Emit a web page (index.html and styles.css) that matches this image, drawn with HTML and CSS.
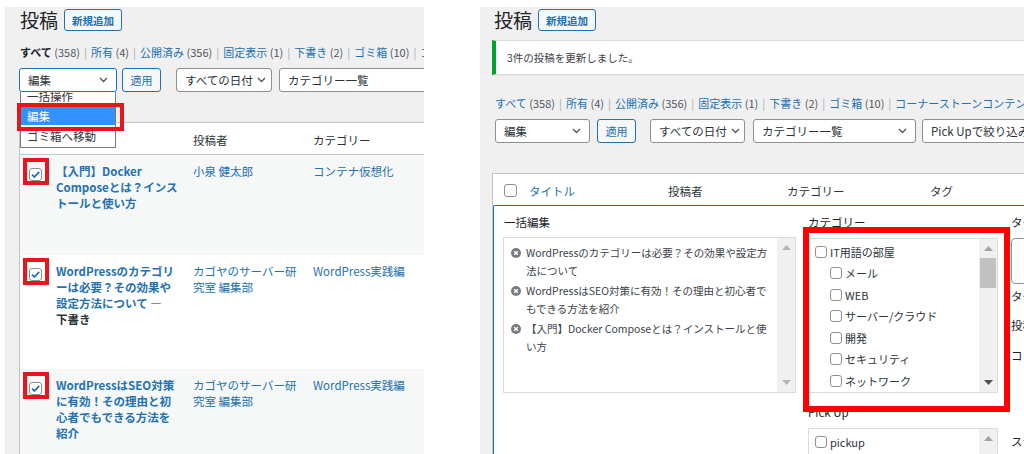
FILE: index.html
```html
<!DOCTYPE html>
<html lang="ja">
<head>
<meta charset="utf-8">
<title>投稿 一括編集</title>
<link rel="stylesheet" href="styles.css">
</head>
<body>
<div class="shots">

  <section class="panel panel-left">
    <div class="head"><h1>投稿</h1><span class="btn-add">新規追加</span></div>
    <div class="subsubsub">
      <span class="current">すべて <span class="count">(358)</span></span><span class="sep">|</span><a>所有 <span class="count">(4)</span></a><span class="sep">|</span><a>公開済み <span class="count">(356)</span></a><span class="sep">|</span><a>固定表示 <span class="count">(1)</span></a><span class="sep">|</span><a>下書き <span class="count">(2)</span></a><span class="sep">|</span><a>ゴミ箱 <span class="count">(10)</span></a><span class="sep">|</span><a>コーナーストーンコンテンツ</a>
    </div>
    <div class="tablenav">
      <div class="select focus w-bulk-l"><span>編集</span><svg width="9" height="6" viewBox="0 0 9 6"><path d="M1 1l3.5 3.5L8 1" fill="none" stroke="#50575e" stroke-width="1.4"/></svg></div>
      <span class="btn-apply ml-5">適用</span>
      <div class="select w-date-l ml-15"><span>すべての日付</span><svg width="9" height="6" viewBox="0 0 9 6"><path d="M1 1l3.5 3.5L8 1" fill="none" stroke="#50575e" stroke-width="1.4"/></svg></div>
      <div class="select w-cat ml-7"><span>カテゴリー一覧</span><svg width="9" height="6" viewBox="0 0 9 6"><path d="M1 1l3.5 3.5L8 1" fill="none" stroke="#50575e" stroke-width="1.4"/></svg></div>
    </div>

    <div class="dd">
      <div class="dd-opt dd-first">一括操作</div>
      <div class="dd-opt dd-sel">編集</div>
      <div class="dd-opt dd-last">ゴミ箱へ移動</div>
    </div>
    <div class="mark mark-opt"></div>

    <div class="lt">
      <div class="lt-head"><span></span><span>タイトル</span><span>投稿者</span><span>カテゴリー</span><span>タグ</span></div>
      <div class="lt-row alt r1">
        <div class="cb-cell"><span class="cb checked"><svg width="11" height="11" viewBox="0 0 11 11"><path d="M2 5.6l2.4 2.4L9.2 2.8" fill="none" stroke="#2271b1" stroke-width="1.8"/></svg></span><span class="mark mark-cb"></span></div>
        <div class="title"><a>【入門】Docker<br>Composeとは？インス<br>トールと使い方</a></div>
        <div class="link">小泉 健太郎</div>
        <div class="link">コンテナ仮想化</div>
        <div></div>
      </div>
      <div class="lt-row r2">
        <div class="cb-cell"><span class="cb checked"><svg width="11" height="11" viewBox="0 0 11 11"><path d="M2 5.6l2.4 2.4L9.2 2.8" fill="none" stroke="#2271b1" stroke-width="1.8"/></svg></span><span class="mark mark-cb"></span></div>
        <div class="title"><a>WordPressのカテゴリ<br>ーは必要？その効果や<br>設定方法について</a> <span class="state">—<br>下書き</span></div>
        <div class="link">カゴヤのサーバー研<br>究室 編集部</div>
        <div class="link">WordPress実践編</div>
        <div></div>
      </div>
      <div class="lt-row alt r3">
        <div class="cb-cell"><span class="cb checked"><svg width="11" height="11" viewBox="0 0 11 11"><path d="M2 5.6l2.4 2.4L9.2 2.8" fill="none" stroke="#2271b1" stroke-width="1.8"/></svg></span><span class="mark mark-cb"></span></div>
        <div class="title"><a>WordPressはSEO対策<br>に有効！その理由と初<br>心者でもできる方法を<br>紹介</a></div>
        <div class="link">カゴヤのサーバー研<br>究室 編集部</div>
        <div class="link">WordPress実践編</div>
        <div></div>
      </div>
    </div>
  </section>

  <section class="panel panel-right">
    <div class="head head-r"><h1>投稿</h1><span class="btn-add">新規追加</span></div>
    <div class="notice"><p>3件の投稿を更新しました。</p></div>
    <div class="subsubsub subsubsub-r">
      <a>すべて <span class="count">(358)</span></a><span class="sep">|</span><a>所有 <span class="count">(4)</span></a><span class="sep">|</span><a>公開済み <span class="count">(356)</span></a><span class="sep">|</span><a>固定表示 <span class="count">(1)</span></a><span class="sep">|</span><a>下書き <span class="count">(2)</span></a><span class="sep">|</span><a>ゴミ箱 <span class="count">(10)</span></a><span class="sep">|</span><a>コーナーストーンコンテンツ</a>
    </div>
    <div class="tablenav tablenav-r">
      <div class="select w-bulk-r"><span>編集</span><svg width="9" height="6" viewBox="0 0 9 6"><path d="M1 1l3.5 3.5L8 1" fill="none" stroke="#50575e" stroke-width="1.4"/></svg></div>
      <span class="btn-apply ml-7">適用</span>
      <div class="select w-date-r ml-14"><span>すべての日付</span><svg width="9" height="6" viewBox="0 0 9 6"><path d="M1 1l3.5 3.5L8 1" fill="none" stroke="#50575e" stroke-width="1.4"/></svg></div>
      <div class="select w-cat ml-8"><span>カテゴリー一覧</span><svg width="9" height="6" viewBox="0 0 9 6"><path d="M1 1l3.5 3.5L8 1" fill="none" stroke="#50575e" stroke-width="1.4"/></svg></div>
      <div class="select w-pick ml-6"><span>Pick Upで絞り込み</span></div>
    </div>

    <div class="rt">
      <div class="rt-head">
        <span class="cb-h"><span class="cb"></span></span>
        <span class="th-link">タイトル</span>
        <span>投稿者</span>
        <span>カテゴリー</span>
        <span>タグ</span>
      </div>
      <div class="bulk">
        <div class="bcol bcol-1">
          <div class="legend">一括編集</div>
          <div class="scrollbox list-box">
            <ul class="bl-items">
              <li><svg class="xi" width="10" height="10" viewBox="0 0 10 10"><circle cx="5" cy="5" r="5" fill="#787c82"/><path d="M3.2 3.2l3.6 3.6M6.8 3.2l-3.6 3.6" stroke="#fff" stroke-width="1.4"/></svg><span>WordPressのカテゴリーは必要？その効果や設定方<br>法について</span></li>
              <li><svg class="xi" width="10" height="10" viewBox="0 0 10 10"><circle cx="5" cy="5" r="5" fill="#787c82"/><path d="M3.2 3.2l3.6 3.6M6.8 3.2l-3.6 3.6" stroke="#fff" stroke-width="1.4"/></svg><span>WordPressはSEO対策に有効！その理由と初心者で<br>もできる方法を紹介</span></li>
              <li><svg class="xi" width="10" height="10" viewBox="0 0 10 10"><circle cx="5" cy="5" r="5" fill="#787c82"/><path d="M3.2 3.2l3.6 3.6M6.8 3.2l-3.6 3.6" stroke="#fff" stroke-width="1.4"/></svg><span>【入門】Docker Composeとは？インストールと使<br>い方</span></li>
            </ul>
            <div class="sb">
              <svg width="9" height="5" viewBox="0 0 9 5"><path d="M0 5L4.5 0 9 5z" fill="#b4b4b4"/></svg>
              <svg width="9" height="5" viewBox="0 0 9 5"><path d="M0 0h9L4.5 5z" fill="#b4b4b4"/></svg>
            </div>
          </div>
        </div>

        <div class="bcol bcol-2">
          <div class="label">カテゴリー</div>
          <div class="scrollbox cat-box">
            <ul class="cat-items">
              <li><span class="cb cb-s"></span>IT用語の部屋</li>
              <li class="child"><span class="cb cb-s"></span>メール</li>
              <li class="child"><span class="cb cb-s"></span>WEB</li>
              <li class="child"><span class="cb cb-s"></span>サーバー/クラウド</li>
              <li class="child"><span class="cb cb-s"></span>開発</li>
              <li class="child"><span class="cb cb-s"></span>セキュリティ</li>
              <li class="child"><span class="cb cb-s"></span>ネットワーク</li>
            </ul>
            <div class="sb">
              <svg width="9" height="5" viewBox="0 0 9 5"><path d="M0 5L4.5 0 9 5z" fill="#a3a3a3"/></svg>
              <span class="thumb"></span>
              <svg width="9" height="5" viewBox="0 0 9 5"><path d="M0 0h9L4.5 5z" fill="#505050"/></svg>
            </div>
          </div>
          <div class="label label-pick">Pick Up</div>
          <div class="scrollbox pick-box">
            <ul class="cat-items">
              <li><span class="cb cb-s"></span>pickup</li>
            </ul>
            <div class="sb">
              <svg width="9" height="5" viewBox="0 0 9 5"><path d="M0 5L4.5 0 9 5z" fill="#a3a3a3"/></svg>
            </div>
          </div>
          <div class="mark mark-cat"></div>
        </div>

        <div class="bcol bcol-3">
          <div class="label">タグ</div>
          <div class="textarea"></div>
          <div class="label lab-tag2">タグ</div>
          <div class="label lab-post">投稿者</div>
          <div class="label lab-com">コメント</div>
          <div class="label lab-st">ステータス</div>
        </div>
      </div>
    </div>
  </section>

</div>
</body>
</html>
```

FILE: styles.css
```css
* { box-sizing: border-box; }
html, body { margin: 0; padding: 0; }
body {
  width: 1024px;
  height: 454px;
  overflow: hidden;
  background: #fff;
  font-family: "Noto Sans CJK JP", "Noto Sans", sans-serif;
  color: #3c434a;
}
ul { list-style: none; margin: 0; padding: 0; }
p { margin: 0; }
a { color: #2271b1; text-decoration: none; }

.shots { display: flex; padding: 7px 0 0 5px; height: 454px; }
.panel {
  background: #f0f0f1;
  height: 447px;
  overflow: hidden;
  position: relative;
  flex: none;
}
.panel-left { width: 419px; padding: 2px 0 0 14px; }
.panel-right { width: 544px; margin-left: 56px; padding: 2px 0 0 12px; }

/* heading */
.head { display: flex; align-items: center; height: 22px; }
.head h1 {
  margin: 0 0 0 1px;
  font-size: 19px;
  font-weight: 400;
  line-height: 22px;
  color: #1d2327;
}
.head-r h1 { margin-left: 2px; }
.btn-add {
  margin-left: 6px;
  width: 58px;
  height: 22px;
  border: 1px solid #2271b1;
  border-radius: 3px;
  background: #f6f7f7;
  color: #2271b1;
  font-size: 10.5px;
  font-weight: 700;
  display: flex;
  align-items: center;
  justify-content: center;
}

/* status links */
.subsubsub {
  margin: 14px 0 0 1px;
  font-size: 11px;
  line-height: 14px;
  white-space: nowrap;
  color: #50575e;
}
.subsubsub-r { margin: 21px 0 0 3px; }
.subsubsub .current { color: #1d2327; font-weight: 700; }
.subsubsub .count { color: #50575e; font-weight: 400; }
.subsubsub .sep { color: #a7aaad; margin: 0 4px; }

/* notice */
.notice {
  margin-top: 9px;
  width: 600px;
  height: 35px;
  background: #fff;
  border: 1px solid #dcdcde;
  border-left: 4px solid #00a32a;
  box-shadow: 0 1px 1px rgba(0,0,0,.04);
  display: flex;
  align-items: center;
  padding-left: 11px;
  font-size: 10.5px;
  color: #3c434a;
}

/* controls */
.tablenav { display: flex; margin-top: 9px; height: 24px; }
.tablenav-r { margin-left: 3px; }
.select {
  flex: none;
  height: 24px;
  border: 1px solid #8c8f94;
  border-radius: 3px;
  background: #fff;
  display: flex;
  align-items: center;
  justify-content: space-between;
  gap: 4px;
  padding: 0 8px;
  font-size: 11.5px;
  color: #2c3338;
  white-space: nowrap;
  overflow: hidden;
}
.select svg { flex: none; }
.select.focus { border-color: #2271b1; }
.btn-apply {
  flex: none;
  width: 39px;
  height: 24px;
  border: 1px solid #2271b1;
  border-radius: 3px;
  background: #f6f7f7;
  color: #2271b1;
  font-size: 11px;
  display: flex;
  align-items: center;
  justify-content: center;
}
.w-bulk-l { width: 98px; }
.w-date-l { width: 96px; padding-right: 6px; }
.w-bulk-r { width: 95px; }
.w-date-r { width: 95px; padding-right: 6px; }
.w-cat { width: 163px; }
.w-pick { width: 140px; justify-content: flex-start; }
.ml-5 { margin-left: 5px; }
.ml-6 { margin-left: 6px; }
.ml-7 { margin-left: 7px; }
.ml-8 { margin-left: 8px; }
.ml-14 { margin-left: 14px; }
.ml-15 { margin-left: 15px; }

/* dropdown (open select list) */
.dd {
  position: absolute;
  left: 15px;
  top: 85px;
  width: 96px;
  height: 56px;
  background: #fff;
  border: 1px solid #7a7a7a;
  border-top: none;
  overflow: hidden;
  z-index: 5;
  font-size: 11.5px;
  color: #2c3338;
}
.dd-opt { padding-left: 6px; white-space: nowrap; }
.dd-first { margin-top: -2px; height: 17px; line-height: 12px; }
.dd-sel { height: 18px; line-height: 18px; background: #3390ff; color: #fff; }
.dd-last { height: 20px; line-height: 22px; }

/* red annotation frames */
.mark { position: absolute; border: 4px solid #e8151f; z-index: 6; }
.mark-opt { left: 12px; top: 96px; width: 107px; height: 28px; }
.mark-cb { left: 3px; top: -5px; width: 26px; height: 27px; }
.mark-cat { left: -5px; top: 13px; width: 207px; height: 185px; border: 6px solid #ff0000; }

/* checkboxes */
.cb {
  display: inline-flex;
  align-items: center;
  justify-content: center;
  width: 13px;
  height: 13px;
  border: 1px solid #8c8f94;
  border-radius: 3px;
  background: #fff;
  flex: none;
}
.cb-s { width: 12px; height: 12px; }

/* left list table */
.lt {
  margin-top: 30px;
  width: 600px;
  border: 1px solid #c3c4c7;
  background: #fff;
}
.lt-head, .lt-row {
  display: grid;
  grid-template-columns: 36px 137px 120px 120px 1fr;
  font-size: 11.5px;
}
.lt-head {
  height: 32px;
  padding-top: 3px;
  align-items: center;
  border-bottom: 1px solid #c3c4c7;
  color: #2c3338;
}
.lt-row { padding-top: 8px; line-height: 16px; align-items: start; }
.alt { background: #f6f7f7; }
.r1 { height: 100px; }
.r2 { height: 114px; }
.r3 { height: 120px; }
.cb-cell { position: relative; padding: 4px 0 0 9px; height: 24px; }
.title { font-weight: 700; white-space: nowrap; }
.title .state { color: #2c3338; }
.link { color: #2271b1; white-space: nowrap; }

/* right table */
.rt {
  margin-top: 30px;
  width: 620px;
  border: 1px solid #c3c4c7;
  border-bottom: none;
  background: #fff;
}
.rt-head {
  display: grid;
  grid-template-columns: 36px 139px 119px 143px 1fr;
  height: 31px;
  padding-top: 2px;
  align-items: center;
  font-size: 11.5px;
  color: #2c3338;
}
.cb-h { padding-left: 11px; display: flex; }
.th-link { color: #2271b1; }

.bulk {
  display: flex;
  height: 260px;
  border-top: 1px solid #2271b1;
  border-left: 1px solid #2271b1;
  border-top-left-radius: 2px;
  padding: 8px 0 0 9px;
  background: #fff;
}
.bcol { flex: none; position: relative; }
.bcol-1 { width: 293px; }
.bcol-2 { width: 190px; margin-left: 12px; }
.bcol-3 { width: 200px; margin-left: 13px; }
.legend, .label {
  font-size: 11.5px;
  line-height: 16px;
  color: #1d2327;
  white-space: nowrap;
}
.legend { margin-left: 1px; }

.scrollbox {
  display: flex;
  border: 1px solid #dcdcde;
  background: #fff;
}
.list-box { margin-top: 7px; height: 156px; }
.bl-items {
  flex: 1;
  padding: 6px 0 0 7px;
  font-size: 10.5px;
  line-height: 17.5px;
  color: #3c434a;
}
.bl-items li { display: flex; gap: 5px; margin-bottom: 3px; white-space: nowrap; }
.xi { flex: none; margin-top: 4px; }

.sb {
  width: 18px;
  flex: none;
  background: #f0f0f0;
  position: relative;
  display: flex;
  flex-direction: column;
  justify-content: space-between;
  align-items: center;
  padding: 7px 0 7px;
}
.thumb {
  position: absolute;
  left: 1px;
  right: 1px;
  top: 19px;
  height: 30px;
  background: #c1c1c1;
}

.cat-box { margin-top: 8px; height: 155px; }
.cat-items { flex: 1; padding: 2px 0 0 6px; font-size: 11px; color: #2c3338; }
.cat-items li { display: flex; align-items: center; gap: 3px; height: 21.5px; white-space: nowrap; }
.cat-items li.child { padding-left: 15px; }
.label-pick { margin-top: 11px; }
.pick-box { margin-top: 8px; height: 40px; }
.pick-box .sb { justify-content: flex-start; }

.textarea {
  margin-top: 8px;
  height: 46px;
  border: 1px solid #8c8f94;
  border-radius: 4px;
  background: #fff;
}
.lab-tag2 { margin-top: 4px; }
.lab-post { margin-top: 13px; }
.lab-com { margin-top: 14px; }
.lab-st { margin-top: 70px; }
```
